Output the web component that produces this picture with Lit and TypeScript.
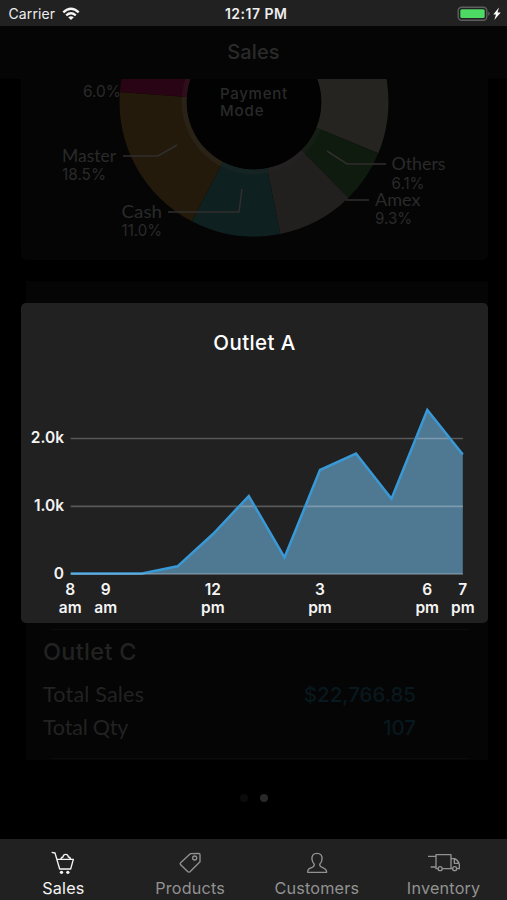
import { LitElement, html, svg, css } from "lit";
import { customElement } from "lit/decorators.js";

const CX = 233;
const CY = 23;

interface Slice {
  from: number;
  to: number;
  fill: string;
  inner: string;
}

const slices: Slice[] = [
  { from: -40, to: 22.4, fill: "#252420", inner: "#252420" },
  { from: 22.4, to: 45.4, fill: "#0e1b0e", inner: "#151e15" },
  { from: 45.4, to: 78.8, fill: "#221f1f", inner: "#242122" },
  { from: 78.8, to: 117.5, fill: "#0e201f", inner: "#152423" },
  { from: 117.5, to: 184.3, fill: "#231a0b", inner: "#292216" },
  { from: 184.3, to: 215, fill: "#280414", inner: "#2c0f1b" },
];

const arc = (from: number, to: number, outer: number, inner: number) => {
  const pt = (deg: number, r: number) => {
    const a = (deg * Math.PI) / 180;
    return `${(CX + r * Math.cos(a)).toFixed(2)} ${(CY + r * Math.sin(a)).toFixed(2)}`;
  };
  return `M${pt(from, outer)}A${outer} ${outer} 0 0 1 ${pt(to, outer)}L${pt(to, inner)}A${inner} ${inner} 0 0 0 ${pt(from, inner)}Z`;
};

@customElement("payment-donut")
export class PaymentDonut extends LitElement {
  static styles = css`
    :host { display: block; }
    .chart { display: block; }
    .label { font: 400 17.5px Lato, sans-serif; fill: #2a2a2a; }
    .share { font: 400 16px Inter, sans-serif; fill: #2a2a2a; }
    .center { font: 500 15px Inter, sans-serif; fill: #2a2a2a; }
    .lead { fill: none; stroke: #302e2e; stroke-width: 1.6; }
  `;
  private label(x: number, y: number, text: string, width: number) {
    const kind = text.endsWith("%") ? "share" : "label";
    return svg`<text class=${kind} x=${x} y=${y} textLength=${width} lengthAdjust="spacingAndGlyphs">${text}</text>`;
  }
  render() {
    return html`<svg class="chart" width="467" height="181" viewBox="0 0 467 181">
      ${slices.map((s) => svg`<path d=${arc(s.from, s.to, 134.5, 67.3)} fill=${s.fill}></path>
        <path d=${arc(s.from, s.to, 72.5, 67.3)} fill=${s.inner}></path>`)}
      <circle cx=${CX} cy=${CY} r="67.3" fill="#020202"></circle>
      <path class="lead" d="M102 77H137L156 66M147 133H218L221 110M365 85H326L306 72M348 121H325"></path>
      ${this.label(62, 18, "6.0%", 38)}
      ${this.label(41, 83, "Master", 54)}
      ${this.label(41, 101, "18.5%", 44)}
      ${this.label(100.5, 139, "Cash", 40.5)}
      ${this.label(100.5, 157, "11.0%", 40.5)}
      ${this.label(370.5, 91, "Others", 54)}
      ${this.label(370.5, 109.5, "6.1%", 33)}
      ${this.label(354, 127, "Amex", 45.5)}
      ${this.label(354, 145, "9.3%", 37)}
      <text class="center" x="199" y="20" textLength="67">Payment</text>
      <text class="center" x="199" y="37" textLength="43.5">Mode</text>
    </svg>`;
  }
}

const points: [number, number][] = [
  [49.7, 270.5], [85, 270.5], [121, 270.5], [156.5, 263.3], [192, 231], [227.8, 193],
  [263.5, 254.5], [299, 167], [335, 150.5], [370.5, 195.8], [406.3, 107], [441.8, 151.5],
];

const hours: [number, string, string][] = [
  [49.2, "8", "am"], [84.8, "9", "am"], [191.8, "12", "pm"],
  [299, "3", "pm"], [406.2, "6", "pm"], [441.8, "7", "pm"],
];

@customElement("outlet-chart")
export class OutletChart extends LitElement {
  static styles = css`
    :host { display: block; background: #212121; border-radius: 5px; }
    .chart { display: block; }
    .title { font: 500 20.5px Inter, sans-serif; fill: #fff; text-anchor: middle; }
    .axis { font: 600 15.5px Inter, sans-serif; fill: #f4f4f4; }
    .end { text-anchor: end; }
    .mid { text-anchor: middle; }
    .grid { stroke: #fff; stroke-opacity: 0.25; stroke-width: 1.7; }
    .area { fill: #4f7993; }
    .line { fill: none; stroke: #3998d6; stroke-width: 2.5; stroke-linejoin: miter; }
  `;
  render() {
    const line = points.map((p) => p.join(" ")).join("L");
    return html`<svg class="chart" width="467" height="320" viewBox="0 0 467 320">
      <text class="title" x="233.300" y="47" textLength="82">Outlet A</text>
      <path class="area" d="M${line}V271.3H49.7Z"></path>
      <path class="grid" d="M49.7 135.5H442M49.7 203.3H442"></path>
      <path class="line" d="M${line}"></path>
      <path class="grid" d="M49.7 271H442"></path>
      <text class="axis end" x="43" y="140">2.0k</text>
      <text class="axis end" x="43" y="208">1.0k</text>
      <text class="axis end" x="43" y="275.800">0</text>
      ${hours.map(([x, h, m]) => svg`<text class="axis mid" x=${x} y="291.7">${h}</text>
        <text class="axis mid" x=${x} y="310">${m}</text>`)}
    </svg>`;
  }
}

const icons = {
  Sales: svg`<path d="M156 66L166 68L180 116H213L221 87H172M183 86Q186 80 190 80Q191 72 198 72Q205 72 206 80Q211 80 213 86"></path>
    <circle cx="185.500" cy="126" r="5" fill="currentColor" stroke="none"></circle><circle cx="204.500" cy="126" r="5" fill="currentColor" stroke="none"></circle>`,
  Products: svg`<path d="M574 70L599 69Q603 69 603 73V94L573 124Q569 127 565 123L545 103Q542 100 545 97Z"></path><circle cx="587" cy="83" r="6"></circle>`,
  Customers: svg`<path d="M189 69C178 69 173 76 174 87C175 95 178 99 181 102C181 108 179 110 173 112C164 115 161 117 161 126H218C218 117 214 115 206 112C199 110 197 108 197 102C201 98 204 94 204 87C205 76 200 69 189 69Z"></path>`,
  Inventory: svg`<path d="M521 78H544M529 110H544M551 115H545V73H590V115H564M590 85H601Q612 90 615 102V115H608M590 115H594M600 86V99H614"></path>
    <circle cx="557.500" cy="115" r="6"></circle><circle cx="601" cy="115" r="6"></circle>`,
};

const tabs = [
  { name: "Sales", icon: icons.Sales, box: "130 62 120 72", active: true },
  { name: "Products", icon: icons.Products, box: "513 62 120 72", active: false },
  { name: "Customers", icon: icons.Customers, box: "129 62 120 72", active: false },
  { name: "Inventory", icon: icons.Inventory, box: "509 62 120 72", active: false },
];

@customElement("app-root")
export class AppRoot extends LitElement {
  static styles = css`
    :host {
      display: flex; flex-direction: column; position: relative;
      width: 507px; height: 900px; overflow: hidden;
      background: #000; font-family: Inter, sans-serif;
    }
    .status {
      height: 25.5px; flex: none; background: #212121; color: #eee; box-sizing: border-box;
      display: grid; grid-template-columns: 1fr auto 1fr; align-items: center;
      padding: 2px 6px 0 8.5px; font-size: 14px; line-height: 20px;
    }
    .carrier { display: flex; align-items: center; gap: 7px; letter-spacing: 0.1px; }
    .time { font-weight: 600; letter-spacing: 0.5px; margin-left: 3px; }
    .power { display: flex; justify-content: flex-end; }
    .nav {
      height: 53.5px; flex: none; background: #050505; color: #2a2a2a;
      display: flex; align-items: center; justify-content: center;
      font-size: 20px; font-weight: 500; letter-spacing: 0.1px;
    }
    .content { flex: 1; min-height: 0; display: flex; flex-direction: column; padding: 0 19px 0 21px; }
    .card { background: #050505; border-radius: 0 0 6px 6px; height: 181px; flex: none; }
    .outlets {
      margin: 21px 0 0 5px; height: 479px; box-sizing: border-box; flex: none; background: #050505;
      display: flex; flex-direction: column; justify-content: flex-end; color: #222;
    }
    .outlet {
      border-top: 1px solid #0c0c0c; border-bottom: 1px solid #0c0c0c;
      margin: 0 19px 1px 25px; height: 130px; box-sizing: border-box;
    }
    .rows { margin: 7px 53px 0 -8px; display: flex; flex-direction: column; }
    .name { font-size: 23.5px; line-height: 30px; font-weight: 500; letter-spacing: 0.3px; margin-bottom: 10.5px; }
    .row { display: flex; justify-content: space-between; font-size: 21.5px; line-height: 33px; letter-spacing: 0.2px; }
    .key { font-family: Lato, sans-serif; }
    .qty { letter-spacing: -0.2px; }
    .value { color: #08181f; font-size: 20.5px; font-weight: 500; letter-spacing: 0; }
    .dots { display: flex; justify-content: center; gap: 12px; margin: 34px 2px 0 0; }
    .dot { width: 8px; height: 8px; border-radius: 50%; background: #0b0b0b; }
    .current { background: #292929; }
    .modal { position: absolute; left: 20.5px; top: 303px; width: 467px; }
    .tabs { height: 61px; flex: none; background: #212121; display: grid; grid-template-columns: repeat(4, 1fr); }
    .tab { display: flex; flex-direction: column; align-items: center; color: #929292; padding-top: 12px; font-size: 16.2px; letter-spacing: 0.2px; }
    .active { color: #f4f4f4; }
    .icon { fill: none; stroke: currentColor; stroke-width: 4; stroke-linejoin: round; }
    .caption { line-height: 22px; margin-top: 2px; }
  `;
  render() {
    return html`
      <div class="status">
        <div class="carrier"><span>Carrier</span>
          <svg width="18" height="14" viewBox="0 0 18 14" fill="none" stroke="#f4f4f4" stroke-width="2.300">
            <path d="M1.300 5.400Q9 -1.800 16.700 5.400M4.200 8.400Q9 4.200 13.800 8.400"></path>
            <path d="M9 13L6.200 10.200Q9 8.200 11.800 10.200Z" fill="#f4f4f4" stroke="none"></path>
          </svg>
        </div>
        <span class="time">12:17 PM</span>
        <div class="power">
          <svg width="44" height="16" viewBox="0 0 44 16">
            <rect x="1.200" y="1.200" width="28.600" height="13" rx="3.500" fill="none" stroke="#5e5e5e" stroke-width="1.400"></rect>
            <rect x="3.300" y="3.300" width="24.400" height="8.800" rx="1.500" fill="#4cd964"></rect>
            <path d="M31.300 5.500Q34 7.700 31.300 10Z" fill="#666"></path>
            <path d="M42 1.500L36.300 8.600H39L37.300 14L43.700 6.600H40.500Z" fill="#fff"></path>
          </svg>
        </div>
      </div>
      <div class="nav">Sales</div>
      <div class="content">
        <div class="card"><payment-donut></payment-donut></div>
        <div class="outlets">
          <div class="outlet">
            <div class="rows">
              <div class="name">Outlet C</div>
              <div class="row"><span class="key">Total Sales</span><span class="value">$22,766.85</span></div>
              <div class="row"><span class="key qty">Total Qty</span><span class="value">107</span></div>
            </div>
          </div>
        </div>
        <div class="dots"><span class="dot"></span><span class="dot current"></span></div>
      </div>
      <div class="tabs">
        ${tabs.map((t) => html`<div class="tab ${t.active ? "active" : ""}">
          <svg class="icon" width="40" height="24" viewBox=${t.box}>${t.icon}</svg>
          <span class="caption">${t.name}</span>
        </div>`)}
      </div>
      <outlet-chart class="modal"></outlet-chart>
    `;
  }
}
